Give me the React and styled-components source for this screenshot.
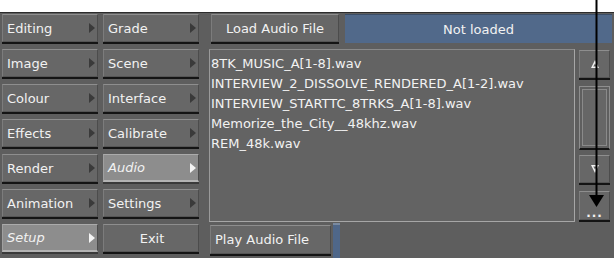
import React from 'react';
import styled, { createGlobalStyle, css } from 'styled-components';

const GlobalStyle = createGlobalStyle`
  html, body {
    margin: 0;
    padding: 0;
    background: #ffffff;
  }
  body {
    font-family: "DejaVu Sans", "Liberation Sans", sans-serif;
    color: #f2f2f2;
  }
`;

const menuItems = [
  ['Editing', 'Grade'],
  ['Image', 'Scene'],
  ['Colour', 'Interface'],
  ['Effects', 'Calibrate'],
  ['Render', 'Audio'],
  ['Animation', 'Settings'],
  ['Setup', 'Exit'],
];

const activeItems = ['Audio', 'Setup'];

const files = [
  '8TK_MUSIC_A[1-8].wav',
  'INTERVIEW_2_DISSOLVE_RENDERED_A[1-2].wav',
  'INTERVIEW_STARTTC_8TRKS_A[1-8].wav',
  'Memorize_the_City__48khz.wav',
  'REM_48k.wav',
];

const Page = styled.div`
  position: relative;
  width: 614px;
  height: 258px;
  overflow: hidden;
`;

const WhiteBand = styled.div`
  height: 12px;
  background: #ffffff;
`;

const Panel = styled.div`
  height: 245px;
  background: #5e5e5e;
  border-top: 1px solid #2c2c2c;
  display: flex;
  padding: 1px 2px 0 2px;
`;

const Menu = styled.div`
  display: grid;
  grid-template-columns: 96px 96px;
  grid-auto-rows: 28px;
  column-gap: 5px;
  row-gap: 7px;
`;

const raised = css`
  box-sizing: border-box;
  background: #676767;
  border-top: 1px solid #8e8e8e;
  border-left: 1px solid #7c7c7c;
  border-right: 1px solid #4c4c4c;
  border-bottom: 1px solid #555;
  box-shadow: 0 2px 0 #141414;
`;

const MenuButton = styled.div`
  ${raised}
  display: flex;
  align-items: center;
  justify-content: ${(p) => (p.$center ? 'center' : 'space-between')};
  padding: 0 2px 0 4px;
  font-size: 13px;
  font-style: ${(p) => (p.$active ? 'italic' : 'normal')};
  ${(p) =>
    p.$active &&
    css`
      background: #8d8d8d;
      border-top-color: #ababab;
      border-left-color: #a0a0a0;
      border-bottom: 2px solid #b4b4b4;
      box-shadow: 0 2px 0 #3a3a3a;
    `}
`;

const Caret = styled.span`
  width: 0;
  height: 0;
  border-top: 5px solid transparent;
  border-bottom: 5px solid transparent;
  border-left: 6px solid ${(p) => (p.$active ? '#f4f4f4' : '#3a3a3a')};
`;

const Right = styled.div`
  margin-left: 10px;
  flex: 1;
  display: flex;
  flex-direction: column;
`;

const TopRow = styled.div`
  display: flex;
  height: 28px;
  padding-left: 2px;
`;

const Button = styled.div`
  ${raised}
  width: ${(p) => p.$w}px;
  height: ${(p) => p.$h || 28}px;
  display: flex;
  align-items: center;
  justify-content: ${(p) => (p.$left ? 'flex-start' : 'center')};
  padding-left: ${(p) => (p.$left ? '4px' : '0')};
  font-size: 13px;
`;

const Status = styled.div`
  flex: 1;
  margin-left: 6px;
  height: 29px;
  background: #51698a;
  border-top: 1px solid #3c4e66;
  box-sizing: border-box;
  display: flex;
  align-items: center;
  justify-content: center;
  font-size: 13px;
`;

const MiddleRow = styled.div`
  display: flex;
  margin-top: 7px;
  height: 173px;
`;

const FileList = styled.div`
  box-sizing: border-box;
  width: 366px;
  height: 173px;
  background: #636363;
  border: 1px solid #a6a6a6;
  border-top-color: #8a8a8a;
  border-left-color: #9a9a9a;
  padding: 4px 0 0 1px;
  font-size: 13px;
  line-height: 20px;
  white-space: nowrap;
`;

const ScrollColumn = styled.div`
  margin-left: 4px;
  width: 31px;
  display: flex;
  flex-direction: column;
  padding-top: 1px;
`;

const ScrollButton = styled(Button)`
  width: 31px;
  margin-bottom: ${(p) => p.$mb}px;
  flex-direction: column;
`;

const Thumb = styled.div`
  box-sizing: border-box;
  height: 64px;
  margin-bottom: 5px;
  border: 1px solid #8e8e8e;
  border-bottom: 2px solid #141414;
  padding: 2px;
  background: #5f5f5f;
`;

const ThumbInner = styled.div`
  box-sizing: border-box;
  height: 100%;
  border: 1px solid #8a8a8a;
  background: #666;
`;

const Dots = styled.span`
  font-size: 12px;
  font-weight: bold;
  letter-spacing: 1px;
  margin-top: 14px;
`;

const BottomRow = styled.div`
  display: flex;
  margin-top: 3px;
  padding-left: 1px;
`;

const BlueStrip = styled.div`
  width: 7px;
  height: 34px;
  margin-left: 2px;
  margin-top: -2px;
  background: #4f6789;
  border-top: 2px solid #7a8aa0;
`;

const Callout = styled.svg`
  position: absolute;
  left: 0;
  top: 0;
  pointer-events: none;
`;

function ArrowGlyph({ up }) {
  return (
    <svg width="10" height="10" viewBox="0 0 10 10">
      {up ? (
        <path d="M5 1 L9 9 L1 9 Z M5 4.5 L3.2 7.6 L6.8 7.6 Z" fill="#f4f4f4" fillRule="evenodd" />
      ) : (
        <path d="M1 1 L9 1 L5 9 Z M3.2 2.4 L6.8 2.4 L5 5.5 Z" fill="#f4f4f4" fillRule="evenodd" />
      )}
    </svg>
  );
}

export default function App() {
  return (
    <Page>
      <GlobalStyle />
      <WhiteBand />
      <Panel>
        <Menu>
          {menuItems.flat().map((label) => {
            const active = activeItems.includes(label);
            const isExit = label === 'Exit';
            return (
              <MenuButton key={label} $active={active} $center={isExit}>
                <span>{label}</span>
                {!isExit && <Caret $active={active} />}
              </MenuButton>
            );
          })}
        </Menu>
        <Right>
          <TopRow>
            <Button $w={128}>Load Audio File</Button>
            <Status>Not loaded</Status>
          </TopRow>
          <MiddleRow>
            <FileList>
              {files.map((f) => (
                <div key={f}>{f}</div>
              ))}
            </FileList>
            <ScrollColumn>
              <ScrollButton $mb={8}>
                <ArrowGlyph up />
              </ScrollButton>
              <Thumb>
                <ThumbInner />
              </Thumb>
              <ScrollButton $mb={8}>
                <ArrowGlyph />
              </ScrollButton>
              <ScrollButton $h={29} $mb={0}>
                <Dots>...</Dots>
              </ScrollButton>
            </ScrollColumn>
          </MiddleRow>
          <BottomRow>
            <Button $w={121} $h={29} $left>
              Play Audio File
            </Button>
            <BlueStrip />
          </BottomRow>
        </Right>
      </Panel>
      <Callout width="614" height="258" viewBox="0 0 614 258">
        <line x1="596.5" y1="0" x2="596.5" y2="197" stroke="#000" strokeWidth="2" />
        <path d="M589 195 L604 195 L596.5 207 Z" fill="#000" />
      </Callout>
    </Page>
  );
}
